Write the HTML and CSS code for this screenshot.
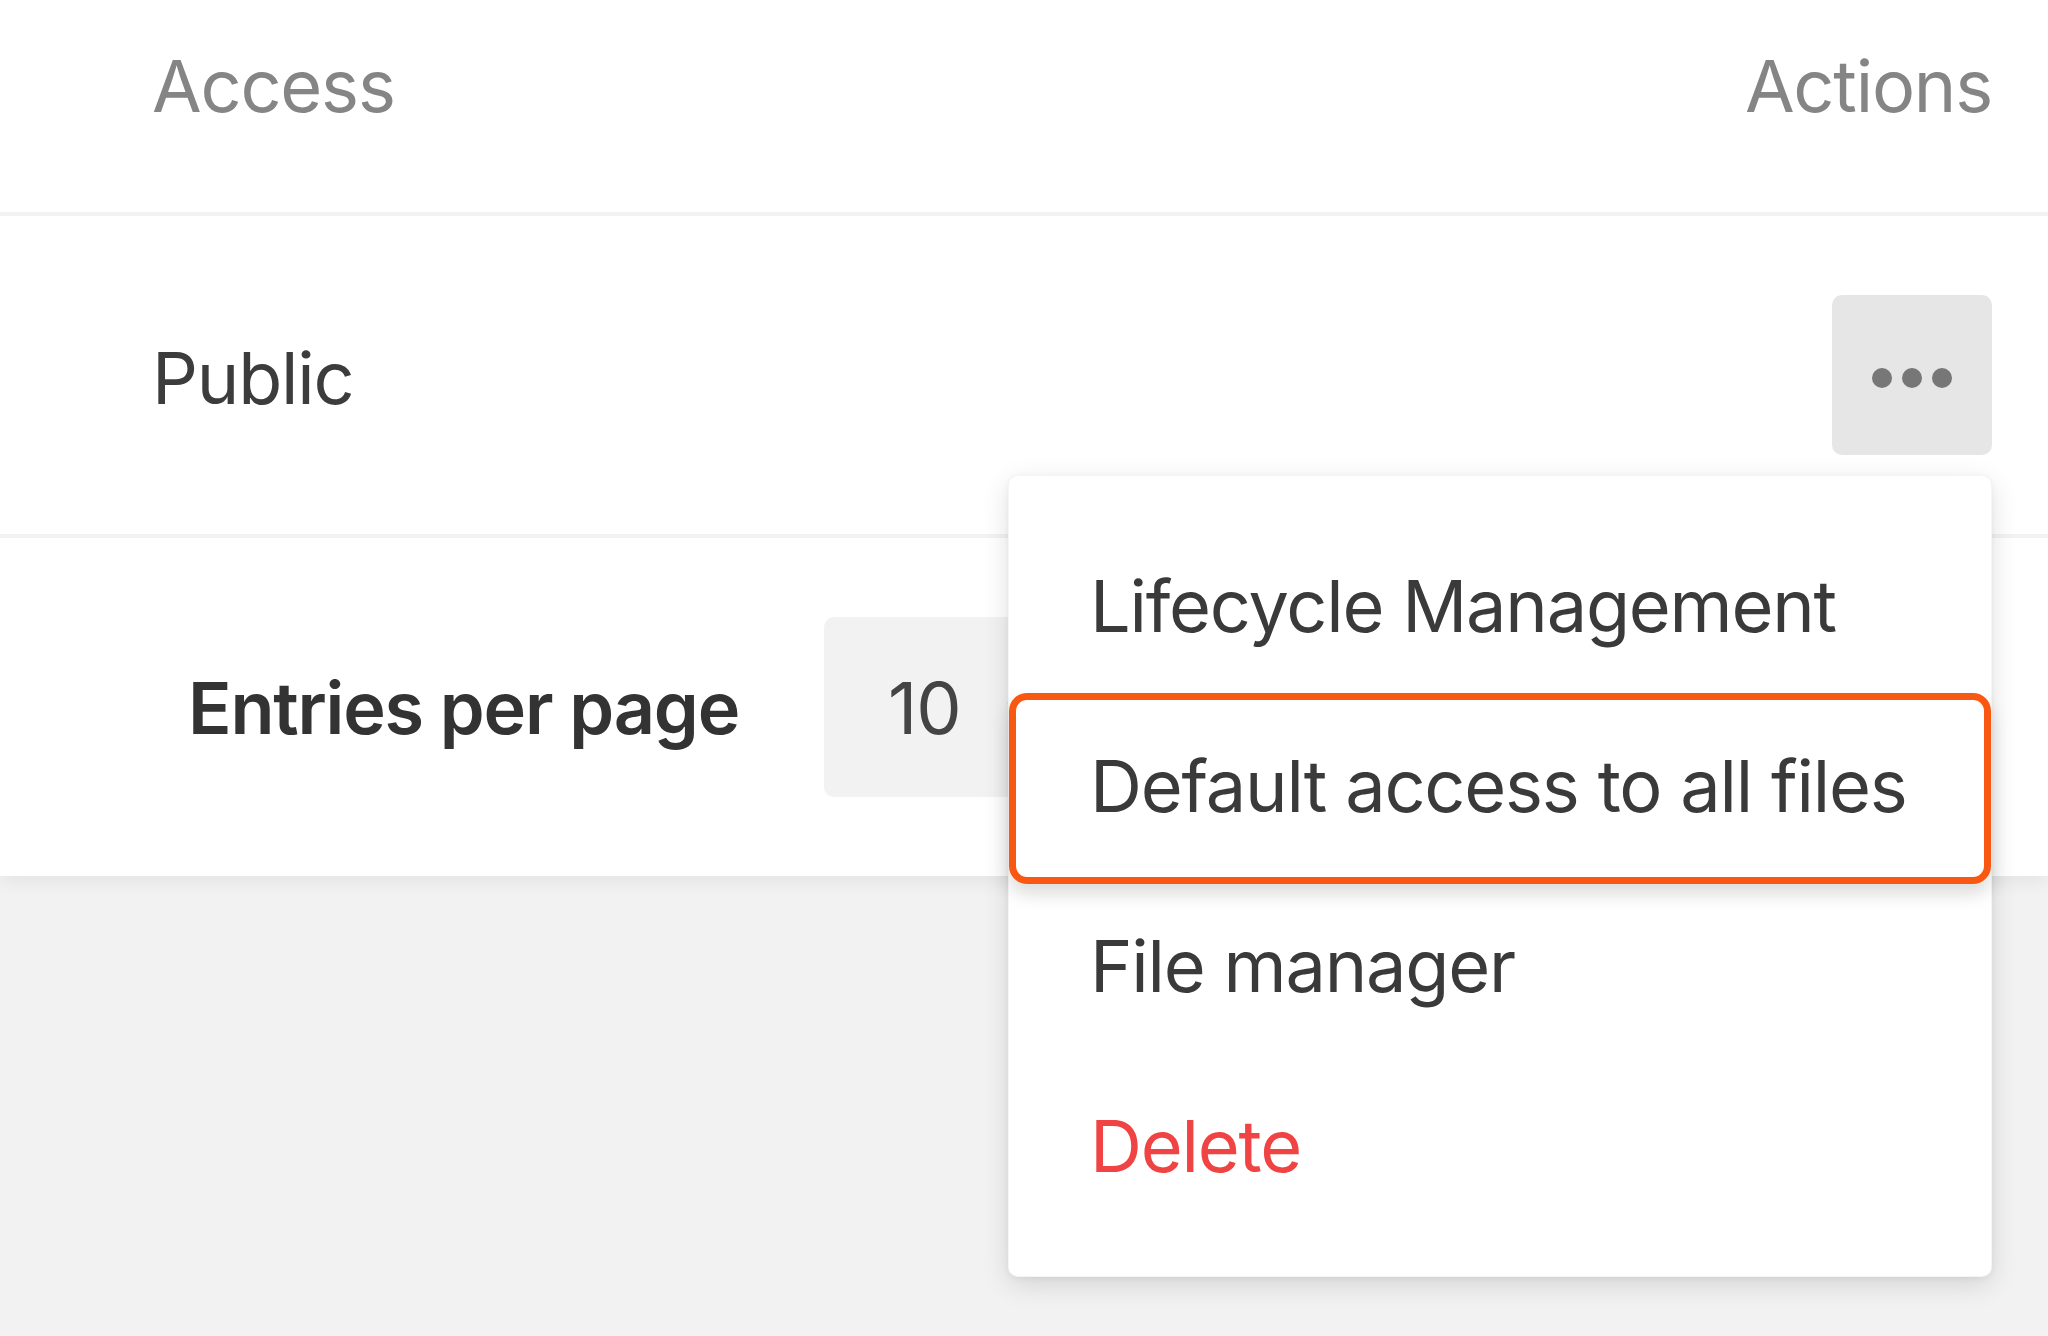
FILE: index.html
```html
<!DOCTYPE html>
<html lang="en">
<head>
<meta charset="utf-8">
<title>Access table</title>
<link rel="stylesheet" href="styles.css">
</head>
<body>
<div class="panel">
  <div class="thead">
    <div class="th">Access</div>
    <div class="th th-right">Actions</div>
  </div>
  <div class="row">
    <div class="cell">Public</div>
    <div class="actions">
      <button class="more" type="button" aria-label="More actions">
        <span class="dot"></span><span class="dot"></span><span class="dot"></span>
      </button>
      <ul class="menu">
        <li class="menu-item">Lifecycle Management</li>
        <li class="menu-item is-marked">Default access to all files</li>
        <li class="menu-item">File manager</li>
        <li class="menu-item danger">Delete</li>
      </ul>
    </div>
  </div>
  <div class="footer">
    <span class="footer-label">Entries per page</span>
    <div class="select">
      <span class="select-value">10</span>
      <svg class="chev" width="40" height="40" viewBox="0 0 24 24" fill="none" stroke="#777" stroke-width="2.5" stroke-linecap="round" stroke-linejoin="round"><path d="M6 9l6 6 6-6"/></svg>
    </div>
  </div>
</div>
</body>
</html>
```

FILE: styles.css
```css
* { box-sizing: border-box; }

html, body {
  margin: 0;
  padding: 0;
  height: 100%;
}

body {
  background: #f2f2f2;
  font-family: Inter, "Noto Sans", "Liberation Sans", sans-serif;
  font-size: 72px;
  line-height: 72px;
  letter-spacing: -1.2px;
  color: #3a3a3a;
  overflow: hidden;
}

.panel {
  background: #ffffff;
  box-shadow: 0 6px 18px rgba(0, 0, 0, 0.06);
}

.thead {
  height: 216px;
  display: flex;
  justify-content: space-between;
  align-items: flex-start;
  padding: 50px 56px 0 152px;
  border-bottom: 4px solid #f2f2f2;
}

.th {
  color: #858585;
  font-weight: 400;
}

.row {
  height: 322px;
  display: flex;
  justify-content: space-between;
  align-items: center;
  padding: 0 56px 0 152px;
  border-bottom: 4px solid #f2f2f2;
  position: relative;
  z-index: 2;
}

.cell {
  color: #3c3c3c;
  padding-top: 6px;
}

.actions {
  position: relative;
}

.more {
  width: 160px;
  height: 160px;
  border: none;
  border-radius: 10px;
  background: #e6e6e6;
  display: flex;
  align-items: center;
  justify-content: center;
  gap: 10px;
  padding: 6px 0 0 0;
  margin: 0;
}

.dot {
  width: 20px;
  height: 20px;
  border-radius: 50%;
  background: #777777;
}

.menu {
  position: absolute;
  top: calc(100% + 20px);
  right: 0;
  width: 984px;
  margin: 0;
  padding: 40px 0;
  list-style: none;
  background: #ffffff;
  border-radius: 10px;
  border: 1px solid rgba(0, 0, 0, 0.04);
  box-shadow: 0 8px 28px rgba(0, 0, 0, 0.12), 0 2px 6px rgba(0, 0, 0, 0.05);
}

.menu-item {
  height: 180px;
  display: flex;
  align-items: center;
  padding: 0 0 0 81px;
  color: #3a3a3a;
  position: relative;
}

.menu-item.is-marked::after {
  content: "";
  position: absolute;
  top: -3px;
  bottom: -8px;
  left: 0;
  right: 0;
  border: 7px solid #f95812;
  border-radius: 18px;
  box-shadow: 0 10px 18px rgba(0, 0, 0, 0.14);
}

.menu-item.danger {
  color: #f04444;
}

.footer {
  height: 338px;
  display: flex;
  align-items: center;
  padding: 0 0 0 188px;
}

.footer-label {
  font-weight: 600;
  color: #333333;
  padding-top: 2px;
}

.select {
  margin-left: 85px;
  width: 260px;
  height: 180px;
  border-radius: 10px;
  background: #f2f2f2;
  display: flex;
  align-items: center;
  padding: 2px 0 0 64px;
  gap: 40px;
}

.select-value {
  color: #444444;
}

.chev {
  flex: none;
}
```
